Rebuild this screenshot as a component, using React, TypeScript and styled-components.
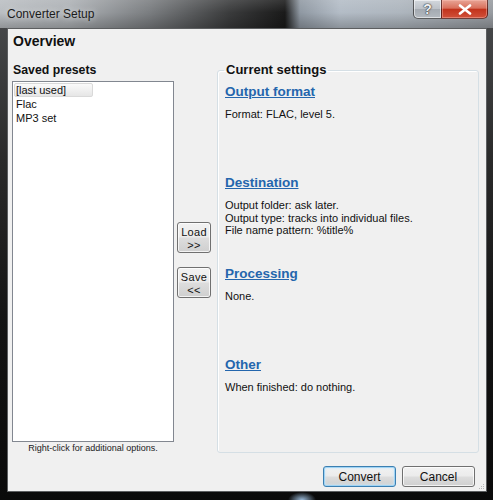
import React from 'react';
import styled, { createGlobalStyle } from 'styled-components';

const UI_FONT = `'Liberation Sans', Arial, sans-serif`;

const GlobalStyle = createGlobalStyle`
  html, body {
    margin: 0;
    padding: 0;
    background: #111;
  }
  * {
    box-sizing: border-box;
  }
`;

type Preset = { name: string; selected?: boolean };
type Section = { title: string; lines: string[] };

const presets: Preset[] = [
  { name: '[last used]', selected: true },
  { name: 'Flac' },
  { name: 'MP3 set' },
];

const sections: Section[] = [
  { title: 'Output format', lines: ['Format: FLAC, level 5.'] },
  {
    title: 'Destination',
    lines: [
      'Output folder: ask later.',
      'Output type: tracks into individual files.',
      'File name pattern: %title%',
    ],
  },
  { title: 'Processing', lines: ['None.'] },
  { title: 'Other', lines: ['When finished: do nothing.'] },
];

export default function App() {
  return (
    <>
      <GlobalStyle />
      <Window>
        <TitleBar>
          <TitleText>Converter Setup</TitleText>
          <CaptionButtons>
            <HelpButton>?</HelpButton>
            <CloseButton>
              <svg width='14' height='11' viewBox='0 0 14 11'>
                <path
                  d='M2 1.5 L12 9.5 M12 1.5 L2 9.5'
                  stroke='#fff'
                  strokeWidth='2.6'
                  strokeLinecap='round'
                />
              </svg>
            </CloseButton>
          </CaptionButtons>
        </TitleBar>

        <Client>
          <Heading>Overview</Heading>

          <Body>
            <PresetColumn>
              <PaneLabel>Saved presets</PaneLabel>
              <ListBox>
                {presets.map((p) => (
                  <ListItem key={p.name} $selected={p.selected}>
                    {p.name}
                  </ListItem>
                ))}
              </ListBox>
              <ListHint>Right-click for additional options.</ListHint>
            </PresetColumn>

            <TransferColumn>
              <TransferButton>
                <span>Load</span>
                <span>&gt;&gt;</span>
              </TransferButton>
              <TransferButton>
                <span>Save</span>
                <span>&lt;&lt;</span>
              </TransferButton>
            </TransferColumn>

            <SettingsGroup>
              <GroupLegend>Current settings</GroupLegend>
              <SectionList>
                {sections.map((s) => (
                  <SettingsSection key={s.title}>
                    <SectionLink>{s.title}</SectionLink>
                    <SectionText>
                      {s.lines.map((l) => (
                        <div key={l}>{l}</div>
                      ))}
                    </SectionText>
                  </SettingsSection>
                ))}
              </SectionList>
            </SettingsGroup>
          </Body>

          <Footer>
            <DialogButton $primary>Convert</DialogButton>
            <DialogButton>Cancel</DialogButton>
          </Footer>

          <SizeGrip width='7' height='7' viewBox='0 0 7 7'>
            <rect x='5' y='1' width='1' height='1' fill='#b8b8b8' />
            <rect x='3' y='3' width='1' height='1' fill='#b8b8b8' />
            <rect x='5' y='3' width='1' height='1' fill='#b8b8b8' />
            <rect x='1' y='5' width='1' height='1' fill='#b8b8b8' />
            <rect x='3' y='5' width='1' height='1' fill='#b8b8b8' />
            <rect x='5' y='5' width='1' height='1' fill='#b8b8b8' />
          </SizeGrip>
        </Client>
      </Window>
    </>
  );
}

const Window = styled.div`
  width: 493px;
  height: 500px;
  display: flex;
  flex-direction: column;
  overflow: hidden;
  font-family: ${UI_FONT};
  background:
    radial-gradient(ellipse 14px 8px at 302px 500px, rgba(170, 205, 240, 0.9), transparent),
    linear-gradient(180deg, #4a4c4e 0, #2a2a2a 160px, #141414 320px, #0a0a0a 100%);
`;

const TitleBar = styled.div`
  height: 28px;
  flex-shrink: 0;
  display: flex;
  align-items: flex-start;
  background:
    linear-gradient(180deg, rgba(255, 255, 255, 0.12) 0, rgba(255, 255, 255, 0) 45%, rgba(0, 0, 0, 0.22) 100%),
    linear-gradient(
      90deg,
      #babec2 0,
      #adb1b5 70px,
      #7a7d80 150px,
      #3a3b3c 230px,
      #1a1a1a 285px,
      #8f98a2 300px,
      #b3bcc6 340px,
      #aeb6be 400px,
      #979ba0 493px
    );
`;

const TitleText = styled.div`
  padding-left: 7px;
  line-height: 28px;
  font-size: 12px;
  color: #1b1b1b;
  text-shadow: 0 0 6px rgba(255, 255, 255, 0.7);
`;

const CaptionButtons = styled.div`
  margin-left: auto;
  margin-right: 5px;
  display: flex;
  height: 19px;
`;

const HelpButton = styled.div`
  width: 28px;
  height: 19px;
  display: flex;
  align-items: center;
  justify-content: center;
  border: 1px solid rgba(40, 40, 40, 0.7);
  border-top: none;
  border-right: none;
  border-bottom-left-radius: 5px;
  background: linear-gradient(180deg, #d3d8dd 0, #bcc1c7 50%, #a4aab1 51%, #b4bac0 100%);
  box-shadow: inset 0 0 0 1px rgba(255, 255, 255, 0.55);
  font-size: 14px;
  font-weight: bold;
  color: #eef0f2;
  text-shadow:
    0 0 1px #3a3a3a,
    0 0 1px #3a3a3a,
    0 0 2px #555;
`;

const CloseButton = styled.div`
  width: 47px;
  height: 19px;
  display: flex;
  align-items: center;
  justify-content: center;
  border: 1px solid rgba(60, 20, 20, 0.7);
  border-top: none;
  border-bottom-right-radius: 5px;
  background: linear-gradient(180deg, #e8a596 0, #d9705c 45%, #c2331c 52%, #d1513a 100%);
  box-shadow: inset 0 0 0 1px rgba(255, 200, 190, 0.4);
`;

const Client = styled.div`
  position: relative;
  width: 480px;
  height: 464px;
  margin-left: 7px;
  flex-shrink: 0;
  display: flex;
  flex-direction: column;
  background: #f0f0f0;
  border: 1px solid #5c5e60;
  color: #111;
`;

const Heading = styled.div`
  height: 33px;
  padding: 3px 0 0 5px;
  font-size: 14px;
  font-weight: bold;
  line-height: 18px;
  color: #111;
`;

const Body = styled.div`
  height: 393px;
  display: flex;
  padding: 0 7px 0 4px;
`;

const PresetColumn = styled.div`
  width: 162px;
  display: flex;
  flex-direction: column;
`;

const PaneLabel = styled.div`
  height: 19px;
  padding-left: 1px;
  font-size: 12.3px;
  font-weight: bold;
  line-height: 16px;
`;

const ListBox = styled.div`
  flex: 1;
  background: #fff;
  border: 1px solid #828790;
  padding: 1px 0 0 1px;
`;

const ListItem = styled.div<{ $selected?: boolean }>`
  width: ${(p) => (p.$selected ? '79px' : 'auto')};
  height: 14px;
  padding-left: 1px;
  font-size: 11px;
  line-height: 12px;
  border: 1px solid ${(p) => (p.$selected ? '#d9d9d9' : 'transparent')};
  border-radius: 2px;
  background: ${(p) => (p.$selected ? 'linear-gradient(180deg, #fafafa, #e6e6e6)' : 'none')};
`;

const ListHint = styled.div`
  height: 13px;
  font-size: 9px;
  line-height: 13px;
  text-align: center;
  color: #222;
`;

const TransferColumn = styled.div`
  width: 35px;
  margin-left: 3px;
  padding-top: 2px;
  display: flex;
  flex-direction: column;
  justify-content: center;
  align-items: flex-start;
  gap: 14px;
`;

const TransferButton = styled.div`
  width: 34px;
  height: 31px;
  padding-top: 3px;
  display: flex;
  flex-direction: column;
  align-items: center;
  font-size: 11px;
  line-height: 13px;
  letter-spacing: 0.3px;
  border: 1px solid #707070;
  border-radius: 3px;
  background: linear-gradient(180deg, #f2f2f2 0, #ebebeb 48%, #dddddd 52%, #cfcfcf 100%);
  box-shadow: inset 0 0 0 1px rgba(255, 255, 255, 0.75);
`;

const SettingsGroup = styled.fieldset`
  width: 262px;
  margin: 1px 0 2px 5px;
  padding: 0 6px;
  min-width: 0;
  border: 1px solid #d5dfe5;
  border-radius: 3px;
  box-shadow: inset 1px 1px 0 #fff;
`;

const GroupLegend = styled.legend`
  padding: 0 2px;
  font-size: 13px;
  font-weight: bold;
  line-height: 14px;
`;

const SectionList = styled.div`
  padding: 6px 0 0 1px;
`;

const SettingsSection = styled.div`
  height: 91px;
`;

const SectionLink = styled.div`
  font-size: 13.5px;
  font-weight: bold;
  line-height: 18px;
  color: #2466ad;
  text-decoration: underline;
`;

const SectionText = styled.div`
  margin-top: 7px;
  font-size: 11px;
  line-height: 12.5px;
`;

const Footer = styled.div`
  flex: 1;
  display: flex;
  justify-content: flex-end;
  align-items: flex-start;
  gap: 6px;
  padding: 11px 11px 0 0;
`;

const DialogButton = styled.div<{ $primary?: boolean }>`
  width: 73px;
  height: 21px;
  display: flex;
  align-items: center;
  justify-content: center;
  font-size: 12px;
  border: 1px solid ${(p) => (p.$primary ? '#3c7fb1' : '#707070')};
  border-radius: 3px;
  background: linear-gradient(180deg, #f2f2f2 0, #ebebeb 48%, #dddddd 52%, #cfcfcf 100%);
  box-shadow: ${(p) =>
    p.$primary ? 'inset 0 0 0 1px #9fd4f5, inset 0 0 3px 1px #cbe9fb' : 'inset 0 0 0 1px rgba(255,255,255,0.75)'};
`;

const SizeGrip = styled.svg`
  position: absolute;
  right: 1px;
  bottom: 1px;
`;
